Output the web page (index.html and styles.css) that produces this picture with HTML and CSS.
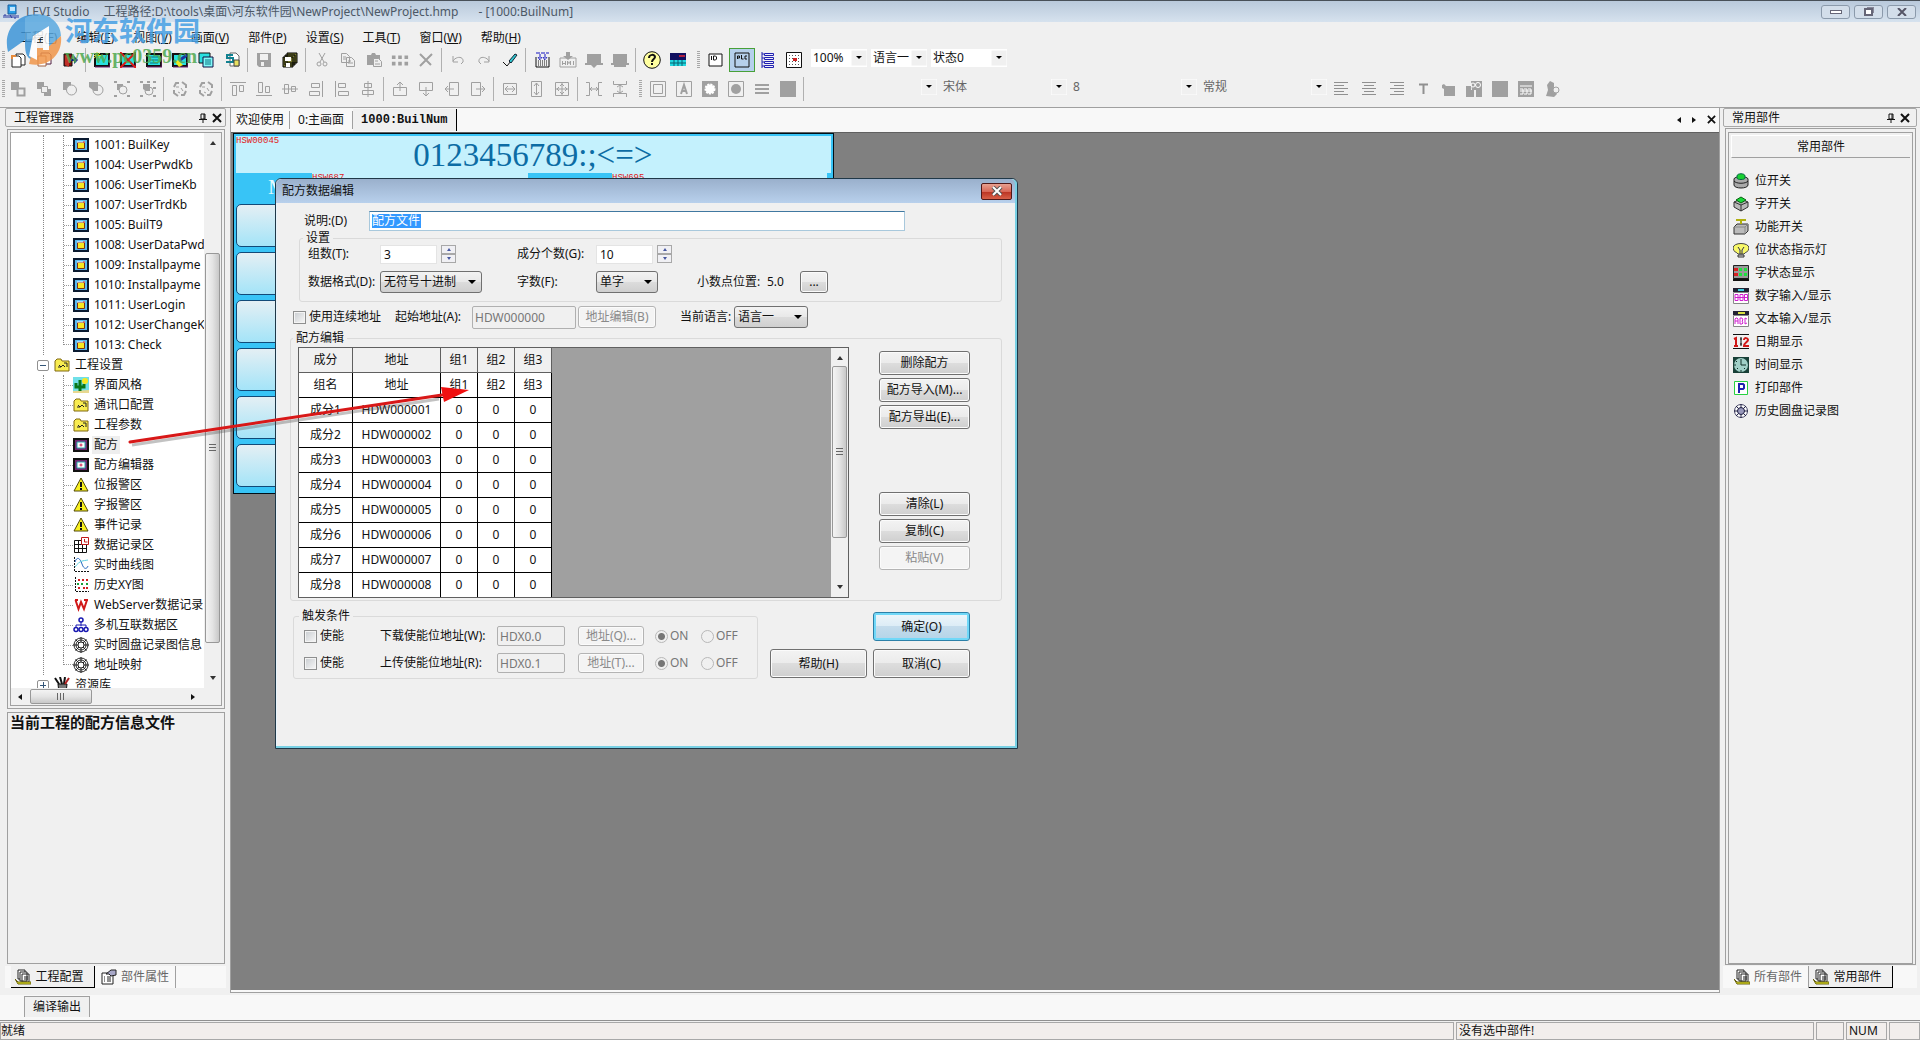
FILE: index.html
```html
<!DOCTYPE html>
<html lang="zh-CN">
<head>
<meta charset="utf-8">
<title>LEVI Studio</title>
<link rel="stylesheet" href="styles.css">
</head>
<body>
<svg class="defs" width="0" height="0" aria-hidden="true">
  <symbol id="app" viewBox="0 0 16 16"><path d="M5 1h8v9H5z" fill="#2aa0e8" stroke="#1a5c9c"/><path d="M7 3h5v4H7z" fill="#bfe6ff"/><path d="M1 14v-3h2v3m2 0v-3m2 3v-3l2 3v-3m2 0v3h2v-3m2 3v-3" stroke="#2838a0" fill="none"/></symbol>
  <symbol id="new" viewBox="0 0 16 16"><path d="M6 2h7l2 2v9H6z" fill="#fff" stroke="#222"/><path d="M2 4h7l2 2v9H2z" fill="#fff" stroke="#222"/><path d="M2 7V4h4" stroke="#e58a3a" fill="none" stroke-width="2"/></symbol>
  <symbol id="open" viewBox="0 0 16 16"><path d="M5 1h8l2 2v9H5z" fill="#fff" stroke="#502040"/><path d="M2 4h8v10H2z" fill="#fff" stroke="#a06040"/></symbol>
  <symbol id="exit" viewBox="0 0 16 16"><path d="M2 2h8v12H2z" fill="#8a1010" stroke="#111"/><path d="M3 3l4 2v10l-4-2z" fill="#c03028"/><path d="M9 7h3V4l4 4-4 4V9H9z" fill="#10108c"/></symbol>
  <symbol id="scr" viewBox="0 0 16 16"><path d="M1 2h14v12H1z" fill="#28e0e0" stroke="#111" stroke-width="2"/><path d="M1 15h15V3" stroke="#702070" fill="none"/></symbol>
  <symbol id="scrnew" viewBox="0 0 16 16"><use href="#scr"/><path d="M3 0v7M0 3.500h7M0 1l6 5M6 1L0 6" stroke="#d8e020"/></symbol>
  <symbol id="scrdel" viewBox="0 0 16 16"><use href="#scr"/><path d="M0 0l16 16M16 0L0 16" stroke="#e01818" stroke-width="2"/></symbol>
  <symbol id="scrlist" viewBox="0 0 16 16"><use href="#scr"/><path d="M4 5h8M4 8h8M4 11h8" stroke="#087080"/></symbol>
  <symbol id="scredit" viewBox="0 0 16 16"><use href="#scr"/><path d="M3 10l4 5 4-2-5-5z" fill="#f0e820"/><path d="M8 8l7-5" stroke="#1838a0" stroke-width="3"/></symbol>
  <symbol id="scrcopy" viewBox="0 0 16 16"><path d="M1 1h11v10H1z" fill="#28e0e0" stroke="#111"/><path d="M5 5h10v10H5z" fill="#80f8f8" stroke="#114"/><path d="M7 8h6M7 10h6M7 12h6" stroke="#087080"/></symbol>
  <symbol id="scrset" viewBox="0 0 16 16"><path d="M6 1h6l3 3v10H6z" fill="#fff" stroke="#666"/><path d="M9 3H3v3h6v4H2" stroke="#118090" stroke-width="2" fill="none"/><path d="M10 8h5v6h-5z" fill="#e8e060" stroke="#444"/></symbol>
  <symbol id="save" viewBox="0 0 16 16"><path fill="#a0a0a0" fill-rule="evenodd" d="M1 1h14v14H3l-2-2zM4 2v6h8V2zM5 10v4h3v-4z"/></symbol>
  <symbol id="saveall" viewBox="0 0 16 16"><path d="M5 1h10v10H5zM3 3h10v10H3zM1 5h10v10H1z" fill="#777830" stroke="#000"/><path d="M3 5h6v4H3zM4 11h4v4H4z" fill="#fff"/></symbol>
  <symbol id="cut" viewBox="0 0 16 16"><path d="M5 1l5 9M11 1L6 10" stroke="#a0a0a0" fill="none"/><circle cx="5" cy="12" r="2" fill="none" stroke="#a0a0a0"/><circle cx="11" cy="12" r="2" fill="none" stroke="#a0a0a0"/></symbol>
  <symbol id="copy" viewBox="0 0 16 16"><path d="M1.500 1.500h5l3 3v6h-8zM6.500 5.500h5l3 3v6h-8zM3 5h3M3 7h3M8 9h3M8 11h5" stroke="#a0a0a0" fill="#efefef"/></symbol>
  <symbol id="paste" viewBox="0 0 16 16"><path d="M1 3h4l1-2h3l1 2h4v10H1z" fill="#a0a0a0"/><path d="M7.500 6.500h5l3 3v5h-8zM9 9h3M9 12h5" fill="#efefef" stroke="#a0a0a0"/></symbol>
  <symbol id="multi" viewBox="0 0 20 16"><path d="M1 3h4v4H1zM8 3h4v4H8zM15 3h4v4h-4zM1 10h4v4H1zM8 10h4v4H8zM15 10h4v4h-4z" fill="#a0a0a0"/></symbol>
  <symbol id="del" viewBox="0 0 16 16"><path d="M2 2l11 11M14 2L2 14" stroke="#a0a0a0" stroke-width="2"/></symbol>
  <symbol id="undo" viewBox="0 0 16 16"><path d="M3 4v6h5M3 9c3-5 11-5 10 1l-2 2" stroke="#a0a0a0" fill="none"/></symbol>
  <symbol id="redo" viewBox="0 0 16 16"><path d="M13 4v6H8M13 9C10 4 2 4 3 10l2 2" stroke="#a0a0a0" fill="none"/></symbol>
  <symbol id="brush" viewBox="0 0 16 16"><path d="M1 10l4 4 4-5" stroke="#111" fill="none"/><path d="M7 9l6-7 2 1-6 8z" fill="#30c8d0" stroke="#123"/></symbol>
  <symbol id="compile" viewBox="0 0 16 16"><path d="M2 5v10h13V5" fill="none" stroke="#111"/><path d="M4 9h9M4 11h9M4 13h9" stroke="#111" stroke-dasharray="1 1"/><path d="M6 2v5M11 2v5M4 5l2 3 2-3M9 5l2 3 2-3M2 1h13" stroke="#1515c0" fill="none" stroke-dasharray="4 1"/></symbol>
  <symbol id="hmi" viewBox="0 0 18 16"><path d="M1 6h16v9H1z" fill="none" stroke="#a0a0a0"/><path d="M7 0h4v4h3L9 8 4 4h3zM3 9h1v4H3zM6 9h1v4H6zM3 11h4v1H3zM8 13V9h1l1 2 1-2h1v4h-1v-2l-1 1-1-1v2zM14 9h1v4h-1z" fill="#a0a0a0"/></symbol>
  <symbol id="down" viewBox="0 0 18 16"><path d="M2 2h14v9h2v2h-6l-3 3-3-3H0v-2h2z" fill="#a0a0a0"/></symbol>
  <symbol id="online" viewBox="0 0 18 16"><path d="M2 2h14v9h2v2h-3v2H3v-2H0v-2h2z" fill="#a0a0a0"/></symbol>
  <symbol id="help" viewBox="0 0 18 18"><circle cx="9" cy="9" r="8.300" fill="#ffffa0" stroke="#111"/><path d="M6 7c0-4 6-4 6-1 0 2-3 2-3 5M9 12v2" stroke="#111" stroke-width="2" fill="none"/></symbol>
  <symbol id="panel" viewBox="0 0 16 16"><path d="M0 1h16v7H0z" fill="#101060"/><path d="M0 8h16v6H0z" fill="#20d8e0"/><path d="M9 4h6" stroke="#b02040" stroke-width="2"/><path d="M0 11h16M4 8v6M8 8v6M12 8v6" stroke="#086070"/></symbol>
  <symbol id="idbox" viewBox="0 0 16 16"><path d="M1 2h13v12H1z" fill="#fff" stroke="#111"/><path d="M3.500 4v4M5.500 4v4h2l1-1V5l-1-1z" stroke="#111" fill="none"/></symbol>
  <symbol id="plc" viewBox="0 0 16 16"><path d="M1 1h14v14H1z" fill="#b6d0ec" stroke="#111"/><path d="M3.500 7V4h2v2h-2M7.500 3v4h2M13 4h-2v3h2" stroke="#111" fill="none"/></symbol>
  <symbol id="list" viewBox="0 0 16 16"><path d="M2 0v16M4.500 1.500h9v2h-9zM4.500 5.500h9v2h-9zM4.500 9.500h9v2h-9zM4.500 13.500h9v2h-9zM2 2h2M2 6h2M2 10h2M2 14h2" stroke="#2020b0" fill="#eef"/></symbol>
  <symbol id="dots" viewBox="0 0 16 16"><path d="M.5.5h15v15H.5z" fill="#fff" stroke="#111"/><path d="M3 3.500h11M3 6.500h11M3 9.500h11M3 12.500h11" stroke="#555" stroke-dasharray="1 2"/><path d="M7 6h4v3H7z" fill="#d02020"/></symbol>
  <symbol id="front" viewBox="0 0 16 16"><path d="M1 1h8v8H1z" fill="#a0a0a0"/><path d="M7.500 7.500h7v7h-7z" fill="#efefef" stroke="#a0a0a0" stroke-width="2"/></symbol>
  <symbol id="back" viewBox="0 0 16 16"><path d="M1 1h7v7H1zM8 8h7v7H8z" fill="#a0a0a0"/><path d="M5.500 5.500h6v6h-6z" fill="#efefef" stroke="#a0a0a0"/></symbol>
  <symbol id="up1" viewBox="0 0 16 16"><path d="M1 1h8v8H1z" fill="#a0a0a0"/><circle cx="9.500" cy="9" r="5" fill="#efefef" stroke="#a0a0a0"/></symbol>
  <symbol id="dn1" viewBox="0 0 16 16"><circle cx="10" cy="9" r="5" fill="#efefef" stroke="#a0a0a0"/><path d="M1 1h9v9H6L1 6z" fill="#a0a0a0"/></symbol>
  <symbol id="grp" viewBox="0 0 16 16"><path d="M3 3h6v6H3z" fill="#a0a0a0"/><circle cx="9" cy="9" r="4" fill="#efefef" stroke="#a0a0a0"/><path d="M0 1h3M13 1h3M0 15h3M13 15h3" stroke="#a0a0a0" stroke-width="2"/></symbol>
  <symbol id="ungrp" viewBox="0 0 16 16"><circle cx="9" cy="10" r="4" fill="#efefef" stroke="#a0a0a0"/><path d="M3 3h7v7H6L3 8z" fill="#a0a0a0"/><path d="M0 1h3M7 1h3M13 1h3M0 15h3M13 15h3M13 7h3" stroke="#a0a0a0" stroke-width="2"/></symbol>
  <symbol id="rot" viewBox="0 0 16 16"><path d="M2 6l2-4h3M10 1l4 3v3M14 10l-2 4H9M6 15l-4-3V9" stroke="#a0a0a0" stroke-width="2" fill="none"/><path d="M4 6h3M9 7l2 3M6 11l2 1" stroke="#a0a0a0"/></symbol>
  <symbol id="altop" viewBox="0 0 16 16"><path d="M0 1.500h16M2.500 4.500h4v10h-4zM9.500 4.500h4v6h-4z" stroke="#a0a0a0" fill="none"/></symbol>
  <symbol id="albot" viewBox="0 0 16 16"><path d="M0 14.500h16M2.500 1.500h4v10h-4zM9.500 5.500h4v6h-4z" stroke="#a0a0a0" fill="none"/></symbol>
  <symbol id="almid" viewBox="0 0 16 16"><path d="M0 8h16M2.500 3.500h4v9h-4zM9.500 5.500h4v5h-4z" stroke="#a0a0a0" fill="none"/></symbol>
  <symbol id="alrt" viewBox="0 0 16 16"><path d="M14.500 0v16M3.500 2.500h8v4h-8zM1.500 10.500h10v4h-10z" stroke="#a0a0a0" fill="none"/></symbol>
  <symbol id="allf" viewBox="0 0 16 16"><path d="M1.500 0v16M4.500 2.500h7v4h-7zM4.500 10.500h10v4h-10z" stroke="#a0a0a0" fill="none"/></symbol>
  <symbol id="alctr" viewBox="0 0 16 16"><path d="M8 0v16M4.500 2.500h7v4h-7zM2.500 9.500h11v4h-11z" stroke="#a0a0a0" fill="none"/></symbol>
  <symbol id="mvup" viewBox="0 0 16 16"><path d="M1.500 6.500h13v8h-13zM8 10V1M5 4l3-3 3 3" stroke="#a0a0a0" fill="none"/></symbol>
  <symbol id="mvdn" viewBox="0 0 16 16"><path d="M1.500 1.500h13v8h-13zM8 6v9M5 12l3 3 3-3" stroke="#a0a0a0" fill="none"/></symbol>
  <symbol id="mvlf" viewBox="0 0 16 16"><path d="M5.500 1.500h9v13h-9zM10 8H1M4 5L1 8l3 3" stroke="#a0a0a0" fill="none"/></symbol>
  <symbol id="mvrt" viewBox="0 0 16 16"><path d="M1.500 1.500h9v13h-9zM6 8h9M12 5l3 3-3 3" stroke="#a0a0a0" fill="none"/></symbol>
  <symbol id="szw" viewBox="0 0 16 16"><path d="M1.500 2.500h13v11h-13zM3 8h10M6 5L3 8l3 3M10 5l3 3-3 3" stroke="#a0a0a0" fill="none"/></symbol>
  <symbol id="szh" viewBox="0 0 16 16"><path d="M3.500.5h10v15h-10zM8.500 2v12M6 5l2.500-3L11 5M6 11l2.500 3 2.500-3" stroke="#a0a0a0" fill="none"/></symbol>
  <symbol id="szb" viewBox="0 0 16 16"><path d="M1.500 1.500h13v13h-13zM8 2v12M2 8h12M6 5l2-2 2 2M6 11l2 2 2-2M5 6L3 8l2 2M11 6l2 2-2 2" stroke="#a0a0a0" fill="none"/></symbol>
  <symbol id="sph" viewBox="0 0 16 16"><path d="M0 1.500h3.500v13H0M16 1.500h-3.500v13H16M4 8h8M6 6L4 8l2 2M10 6l2 2-2 2" stroke="#a0a0a0" fill="none"/></symbol>
  <symbol id="spv" viewBox="0 0 16 16"><path d="M1.500 0v3.500h13V0M1.500 16v-3.500h13V16M8 4v8M5 6l3-2 3 2M5 10l3 2 3-2" stroke="#a0a0a0" fill="none"/></symbol>
  <symbol id="frame" viewBox="0 0 16 16"><path d="M.5.5h15v15H.5zM3.500 3.500h9v9h-9z" stroke="#a0a0a0" fill="none"/></symbol>
  <symbol id="lettera" viewBox="0 0 16 16"><path d="M.5.500h15v15H.5z" stroke="#a0a0a0" fill="none"/><path d="M5 13l3-9 3 9M6 10h4" stroke="#a0a0a0" stroke-width="2" fill="none"/></symbol>
  <symbol id="gear" viewBox="0 0 16 16"><path d="M0 0h16v16H0z" fill="#a0a0a0"/><circle cx="8" cy="8" r="4.500" fill="#fff" stroke="#fff" stroke-dasharray="2 1" stroke-width="2"/></symbol>
  <symbol id="ball" viewBox="0 0 16 16"><path d="M.5.5h15v15H.5z" stroke="#a0a0a0" fill="none"/><circle cx="8" cy="8" r="5" fill="#a0a0a0"/></symbol>
  <symbol id="bars" viewBox="0 0 16 16"><path d="M1 4h14M1 8h14M1 12h14" stroke="#a0a0a0" stroke-width="2"/></symbol>
  <symbol id="fill" viewBox="0 0 16 16"><path d="M0 0h16v16H0z" fill="#a0a0a0"/></symbol>
  <symbol id="txl" viewBox="0 0 14 16"><path d="M0 1.500h14M0 4.500h10M0 7.500h14M0 10.500h10M0 13.500h14" stroke="#909090"/></symbol>
  <symbol id="txc" viewBox="0 0 14 16"><path d="M0 1.500h14M2 4.500h10M0 7.500h14M2 10.500h10M0 13.500h14" stroke="#909090"/></symbol>
  <symbol id="txr" viewBox="0 0 14 16"><path d="M0 1.500h14M4 4.500h10M0 7.500h14M4 10.500h10M0 13.500h14" stroke="#909090"/></symbol>
  <symbol id="tee" viewBox="0 0 16 16"><path d="M4 3.500h9M8.500 3v10" stroke="#909090" stroke-width="2"/></symbol>
  <symbol id="cube" viewBox="0 0 16 16"><path d="M2 4l2-1 2 2h9v10H4V8L2 7z" fill="#a0a0a0"/></symbol>
  <symbol id="rec" viewBox="0 0 16 16"><path d="M0 5h5v4h3v7H0zM5 0h11v16h-6V9H6z" fill="#a0a0a0"/><circle cx="7" cy="4" r="2" fill="none" stroke="#fff"/><circle cx="12" cy="4" r="2.500" fill="none" stroke="#fff"/></symbol>
  <symbol id="tab" viewBox="0 0 16 16"><path d="M0 0h16v16H0z" fill="#a0a0a0"/><path d="M2 5h12M2 8h3v5H2M6 8h3v5H6M10 8h3v5h-3M2 10h12" stroke="#fff" fill="none"/></symbol>
  <symbol id="user" viewBox="0 0 16 16"><path d="M2 15l2-6-1-5 3-4 4 2v5l3 6-3 3z" fill="#a0a0a0"/><circle cx="12" cy="9" r="3" fill="#efefef" stroke="#a0a0a0"/></symbol>
  <symbol id="pin" viewBox="0 0 10 10"><path d="M3 1h4v5H3zM6 1v5M1 6.500h8M5 7v3" stroke="#111" fill="none"/></symbol>
  <symbol id="x" viewBox="0 0 10 10"><path d="M1 1l8 8M9 1L1 9" stroke="#111" stroke-width="2"/></symbol>
  <symbol id="page" viewBox="0 0 16 16"><path d="M1 2h14v12H1z" fill="#58b8f0" stroke="#0a1a30" stroke-width="2"/><path d="M4.500 5.500h7v6h-7z" fill="#f8e820" stroke="#803010"/><path d="M4 5h8" stroke="#fff"/><path d="M10 5h2" stroke="#d02020"/></symbol>
  <symbol id="folder" viewBox="0 0 16 16"><path d="M1 4l2-2h4l1 2h7v10H1z" fill="#f8ec50" stroke="#806810"/><path d="M5 8l2 2 2-2 2 2M10 6h3v4M4 10h3" stroke="#222" fill="none"/></symbol>
  <symbol id="style" viewBox="0 0 16 16"><path d="M0 0h16v16H0z" fill="#70e0e8"/><circle cx="12" cy="4" r="3" fill="#f8e820"/><path d="M0 14l16-1v3H0z" fill="#e8d890"/><path d="M7 14V3M3 6v4h4M11 7v3H7" stroke="#087818" stroke-width="3" fill="none"/></symbol>
  <symbol id="recipe" viewBox="0 0 16 16"><path d="M1 2h14v12H1z" fill="#702870" stroke="#111" stroke-width="2"/><path d="M4 5h8v6H4z" fill="#fff" stroke="#30a8b0"/><path d="M8 6.500v3M6.500 8h3" stroke="#d02050"/></symbol>
  <symbol id="warn" viewBox="0 0 16 16"><path d="M8 1l7 13H1z" fill="#f8f020" stroke="#504808"/><path d="M8 5v5M8 11v2" stroke="#111" stroke-width="2"/></symbol>
  <symbol id="datalog" viewBox="0 0 16 16"><path d="M1.500 3.500h12v12h-12zM1.500 7.500h12M1.500 11.500h12M5.500 3v12M9.500 3v12" stroke="#111" fill="#fff"/><path d="M8.500.5h7v7h-7z" fill="#fff" stroke="#c01818"/><path d="M11.500 2v3h3" stroke="#c01818" fill="none"/></symbol>
  <symbol id="curve" viewBox="0 0 16 16"><path d="M1.500 0v14.500H16" stroke="#111" fill="none" stroke-dasharray="2 1"/><path d="M2 5c2-6 5-4 7 2s5 5 6 2" stroke="#2868c0" fill="none"/><path d="M2 10c5-7 8-6 13-7" stroke="#60d0e0" fill="none"/></symbol>
  <symbol id="xy" viewBox="0 0 16 16"><path d="M2.500 0v14.500H16" stroke="#111" fill="none" stroke-dasharray="2 1"/><path d="M5 3h2m2 0h2m2 0h2" stroke="#d02020" stroke-width="2"/><path d="M4 7h2m2 0h2m3 0h2" stroke="#18a038" stroke-width="2"/><path d="M5 11h2m3 0h2m1 0h2" stroke="#d02020" stroke-width="2"/></symbol>
  <symbol id="web" viewBox="0 0 16 16"><path d="M2 3h3M2.500 3l3 9L8 5l3 7 3-9M11 3h4" stroke="#d01818" stroke-width="2" fill="none"/></symbol>
  <symbol id="net" viewBox="0 0 16 16"><path d="M8 5v4M3 11V8h10v3" stroke="#1818b0" fill="none"/><g fill="#fff" stroke="#1818b0" stroke-width="1.500"><circle cx="8" cy="3" r="2"/><circle cx="3" cy="12.500" r="2"/><circle cx="8" cy="12.500" r="2"/><circle cx="13" cy="12.500" r="2"/></g></symbol>
  <symbol id="disc" viewBox="0 0 16 16"><g fill="none" stroke="#222"><path d="M8 0v16M0 8h16M2.500 2.500l11 11M13.500 2.500l-11 11"/><circle cx="8" cy="8" r="7"/><circle cx="8" cy="8" r="5"/><circle cx="8" cy="8" r="3" fill="#fff"/></g></symbol>
  <symbol id="pens" viewBox="0 0 16 16"><path d="M4 7h9l-1 9H5z" fill="#777" stroke="#111"/><path d="M5 7L1 1M8 7L6 0M10 7l1-7" stroke="#111" stroke-width="2"/><path d="M11 7l4-6" stroke="#b02020" stroke-width="2"/></symbol>
  <symbol id="docs" viewBox="0 0 16 16"><path d="M3 1h7v9H3z" fill="#fff" stroke="#222"/><path d="M5 3h7v9H5zM7 5h7v8H7z" fill="#fff" stroke="#222"/><path d="M9 8h4M9 10h4" stroke="#222"/><path d="M0 10l3 3h13v2H3z" fill="#f0f020" stroke="#666010"/></symbol>
  <symbol id="props" viewBox="0 0 16 16"><path d="M1 4h11v11H1z" fill="#fff" stroke="#222"/><path d="M3 8h1m2 0h4M3 10h1m2 0h4M3 12h1m2 0h4" stroke="#222"/><path d="M5 5l5-4h5v5l-5 1-2-2z" fill="#a8a8c8" stroke="#222"/></symbol>
  <symbol id="bitsw" viewBox="0 0 16 16"><path d="M1 6c0-3 14-3 14 0v6c0 4-14 4-14 0z" fill="#aaa" stroke="#222"/><path d="M1 8c2 3 12 3 14 0" stroke="#222" fill="none"/><path d="M4 3c0-3 8-3 8 0v2c0 2-8 2-8 0z" fill="#18d030" stroke="#064"/></symbol>
  <symbol id="wordsw" viewBox="0 0 16 16"><path d="M1 6l7-3 7 3v5l-7 4-7-4z" fill="#b8b8b8" stroke="#333"/><path d="M8 9v6M1 6l7 3 7-3" stroke="#333" fill="none"/><path d="M3 4l5-3 5 3-5 3z" fill="#18d838" stroke="#086010"/></symbol>
  <symbol id="funcsw" viewBox="0 0 16 16"><path d="M1 8l3-3h11v7l-3 3H1z" fill="#bbb" stroke="#333"/><path d="M1 8h11v7M12 8l3-3" stroke="#888" fill="none"/><path d="M3 1h10M8 1v4" stroke="#b0b010" stroke-width="2"/></symbol>
  <symbol id="lamp" viewBox="0 0 16 16"><path d="M0 6c0-6 16-6 16 0 0 4-4 4-5 6H5C4 10 0 10 0 6z" fill="#f8f868" stroke="#444"/><path d="M5 5l2 3v4M11 5L9 8v4M5 13h6v2H5z" stroke="#333" fill="#ddd"/></symbol>
  <symbol id="wordst" viewBox="0 0 16 16"><path d="M.5.5h15v13H.5z" fill="#999" stroke="#222"/><path d="M0 15h16" stroke="#111" stroke-width="3"/><path d="M1 3h4v3H1zM1 8h4v3H1z" fill="#d82020"/><path d="M6 3h3v3H6zM11 3h3v3h-3zM6 8h3v3H6zM11 8h3v3h-3z" fill="#20e040"/></symbol>
  <symbol id="num" viewBox="0 0 16 16"><path d="M0 0h16v4H0z" fill="#223"/><path d="M5 2h6" stroke="#40d0e0" stroke-width="2"/><path d="M.5 4.500h15v11H.5z" fill="#fff" stroke="#888"/><path d="M2 6.500h3v6H2zM7 6.500h3v6H7zM11.500 6.500h3v6h-3zM2 9.500h12" stroke="#d020d0" fill="none"/></symbol>
  <symbol id="txt" viewBox="0 0 16 16"><path d="M0 0h16v4H0z" fill="#223"/><path d="M5 2h7" stroke="#d8e040" stroke-width="2"/><path d="M.5 4.500h15v11H.5z" fill="#fff" stroke="#888"/><path d="M2 13V8l1-1h1l1 1v5M2 10h3M7 7h2l1 2-1 1 1 2-1 1H7zM14 8l-2-1v6l2-1" stroke="#d020d0" fill="none"/></symbol>
  <symbol id="date" viewBox="0 0 16 16"><path d="M0 .5h16M0 14.500h16" stroke="#111"/><path d="M1 5l2-1v8M1 12h4M11 6c0-3 4-2 4 0 0 2-4 3-4 6h5" stroke="#d01818" stroke-width="2" fill="none"/><path d="M8 3v9M7 5h2M7 10h2" stroke="#111"/></symbol>
  <symbol id="clock" viewBox="0 0 16 16"><path d="M0 0h16v16H0z" fill="#184038"/><circle cx="8" cy="8" r="7" fill="#a0d0c8"/><path d="M8 2v6h5M3 4l1 1M4 12l1-1M12 12l-1-1M8 13v2M1 8h2" stroke="#103028" fill="none"/></symbol>
  <symbol id="print" viewBox="0 0 16 16"><path d="M1.500 1.500h13v13h-13z" fill="#fff" stroke="#28d040"/><path d="M6 13V4h4l1 1v3l-1 1H6" stroke="#2020b0" stroke-width="2" fill="none"/></symbol>
  <symbol id="hdisc" viewBox="0 0 16 16"><circle cx="8" cy="8" r="6.500" fill="#fff" stroke="#446"/><path d="M8 1v14M1 8h14M3 3l10 10M13 3L3 13" stroke="#224"/><circle cx="8" cy="8" r="3.500" fill="#99b" stroke="#224"/></symbol>
</svg>

<header class="titlebar">
  <svg class="ic"><use href="#app"/></svg>
  <h1>LEVI Studio</h1><span>工程路径:D:\tools\桌面\河东软件园\NewProject\NewProject.hmp</span><span>- [1000:BuilNum]</span>
  <div class="winbtns"><button aria-label="最小化"><i class="min"></i></button><button aria-label="还原"><i class="res"></i></button><button aria-label="关闭"><svg width="10" height="8"><path d="M1 0l8 8M9 0L1 8" stroke="#556" stroke-width="2"/></svg></button></div>
</header>

<nav class="menu">
  <a href="#">工程(<u>F</u>)</a><a href="#">编辑(<u>E</u>)</a><a href="#">视图(<u>V</u>)</a><a href="#">画面(<u>V</u>)</a><a href="#">部件(<u>P</u>)</a><a href="#">设置(<u>S</u>)</a><a href="#">工具(<u>T</u>)</a><a href="#">窗口(<u>W</u>)</a><a href="#">帮助(<u>H</u>)</a>
</nav>

<div class="toolbar">
  <i class="grip"></i>
  <button title="新建"><svg class="ic"><use href="#new"/></svg></button><button title="打开"><svg class="ic"><use href="#open"/></svg></button><button title="关闭"><svg class="ic"><use href="#exit"/></svg></button>
  <i class="sep"></i>
  <button title="新建画面"><svg class="ic"><use href="#scrnew"/></svg></button><button title="删除画面"><svg class="ic"><use href="#scrdel"/></svg></button><button title="画面列表"><svg class="ic"><use href="#scrlist"/></svg></button><button title="画面属性"><svg class="ic"><use href="#scredit"/></svg></button><button title="复制画面"><svg class="ic"><use href="#scrcopy"/></svg></button><button title="画面设置"><svg class="ic"><use href="#scrset"/></svg></button>
  <i class="sep"></i>
  <button title="保存"><svg class="ic"><use href="#save"/></svg></button><button title="全部保存"><svg class="ic"><use href="#saveall"/></svg></button>
  <i class="sep"></i>
  <button title="剪切"><svg class="ic"><use href="#cut"/></svg></button><button title="复制"><svg class="ic"><use href="#copy"/></svg></button><button title="粘贴"><svg class="ic"><use href="#paste"/></svg></button><button title="多重复制"><svg class="ic wide"><use href="#multi"/></svg></button><button title="删除"><svg class="ic"><use href="#del"/></svg></button>
  <i class="sep"></i>
  <button title="撤消"><svg class="ic"><use href="#undo"/></svg></button><button title="重做"><svg class="ic"><use href="#redo"/></svg></button><button title="格式刷"><svg class="ic"><use href="#brush"/></svg></button>
  <i class="sep"></i>
  <button title="编译"><svg class="ic"><use href="#compile"/></svg></button><button title="下载到HMI"><svg class="ic wide"><use href="#hmi"/></svg></button><button title="离线模拟"><svg class="ic wide"><use href="#down"/></svg></button><button title="在线模拟"><svg class="ic wide"><use href="#online"/></svg></button>
  <i class="sep"></i>
  <button title="帮助"><svg class="ic wide"><use href="#help"/></svg></button><button title="面板"><svg class="ic"><use href="#panel"/></svg></button>
  <i class="grip mid"></i>
  <button title="ID"><svg class="ic"><use href="#idbox"/></svg></button><button class="on" title="PLC"><svg class="ic"><use href="#plc"/></svg></button><button title="列表"><svg class="ic"><use href="#list"/></svg></button><button title="网格"><svg class="ic"><use href="#dots"/></svg></button>
  <select class="flat zoomsel" aria-label="缩放"><option>100%</option></select><select class="flat langsel" aria-label="语言"><option>语言一</option></select><select class="flat statesel" aria-label="状态"><option>状态0</option></select>
</div>
<div class="toolbar second">
  <i class="grip"></i>
  <button title="置顶"><svg class="ic"><use href="#front"/></svg></button><button title="置底"><svg class="ic"><use href="#back"/></svg></button><button title="上移一层"><svg class="ic"><use href="#up1"/></svg></button><button title="下移一层"><svg class="ic"><use href="#dn1"/></svg></button><button title="组合"><svg class="ic"><use href="#grp"/></svg></button><button title="取消组合"><svg class="ic"><use href="#ungrp"/></svg></button>
  <i class="sep"></i>
  <button title="左旋转"><svg class="ic"><use href="#rot"/></svg></button><button title="右旋转"><svg class="ic"><use href="#rot"/></svg></button>
  <i class="sep"></i>
  <button title="顶对齐"><svg class="ic"><use href="#altop"/></svg></button><button title="底对齐"><svg class="ic"><use href="#albot"/></svg></button><button title="水平居中"><svg class="ic"><use href="#almid"/></svg></button><button title="右对齐"><svg class="ic"><use href="#alrt"/></svg></button><button title="左对齐"><svg class="ic"><use href="#allf"/></svg></button><button title="垂直居中"><svg class="ic"><use href="#alctr"/></svg></button>
  <i class="sep"></i>
  <button title="上移"><svg class="ic"><use href="#mvup"/></svg></button><button title="下移"><svg class="ic"><use href="#mvdn"/></svg></button><button title="左移"><svg class="ic"><use href="#mvlf"/></svg></button><button title="右移"><svg class="ic"><use href="#mvrt"/></svg></button>
  <i class="sep"></i>
  <button title="等宽"><svg class="ic"><use href="#szw"/></svg></button><button title="等高"><svg class="ic"><use href="#szh"/></svg></button><button title="等大小"><svg class="ic"><use href="#szb"/></svg></button>
  <i class="sep"></i>
  <button title="水平等距"><svg class="ic"><use href="#sph"/></svg></button><button title="垂直等距"><svg class="ic"><use href="#spv"/></svg></button>
  <i class="grip mid"></i>
  <button title="边框"><svg class="ic"><use href="#frame"/></svg></button><button title="文本"><svg class="ic"><use href="#lettera"/></svg></button><button title="图样"><svg class="ic"><use href="#gear"/></svg></button><button title="图形"><svg class="ic"><use href="#ball"/></svg></button><button title="线型"><svg class="ic"><use href="#bars"/></svg></button><button title="填充"><svg class="ic"><use href="#fill"/></svg></button>
  <i class="sep"></i>
  <select class="flat dim" aria-label="样式"><option></option></select><select class="flat dim" aria-label="字体"><option>宋体</option></select><select class="flat dim" aria-label="字号"><option>8</option></select><select class="flat dim" aria-label="字形"><option>常规</option></select>
  <button class="al" title="文字左对齐"><svg class="ic"><use href="#txl"/></svg></button><button class="al" title="文字居中"><svg class="ic"><use href="#txc"/></svg></button><button class="al" title="文字右对齐"><svg class="ic"><use href="#txr"/></svg></button><button class="nar" title="文字"><svg class="ic"><use href="#tee"/></svg></button><button title="部件"><svg class="ic"><use href="#cube"/></svg></button><button title="录制"><svg class="ic"><use href="#rec"/></svg></button><button title="块"><svg class="ic"><use href="#fill"/></svg></button><button title="表"><svg class="ic"><use href="#tab"/></svg></button><button title="用户"><svg class="ic"><use href="#user"/></svg></button>
</div>

<main>
  <aside class="side left">
    <header class="cap"><h2>工程管理器</h2><button aria-label="固定"><svg><use href="#pin"/></svg></button><button aria-label="关闭"><svg><use href="#x"/></svg></button></header>
    <div class="treebox">
      <div class="treein">
        <div class="treemid">
          <ul class="tree">
            <li><i></i><svg class="ic"><use href="#page"/></svg><span>1001: BuilKey</span></li>
            <li><i></i><svg class="ic"><use href="#page"/></svg><span>1004: UserPwdKb</span></li>
            <li><i></i><svg class="ic"><use href="#page"/></svg><span>1006: UserTimeKb</span></li>
            <li><i></i><svg class="ic"><use href="#page"/></svg><span>1007: UserTrdKb</span></li>
            <li><i></i><svg class="ic"><use href="#page"/></svg><span>1005: BuilT9</span></li>
            <li><i></i><svg class="ic"><use href="#page"/></svg><span>1008: UserDataPwd</span></li>
            <li><i></i><svg class="ic"><use href="#page"/></svg><span>1009: Installpayme</span></li>
            <li><i></i><svg class="ic"><use href="#page"/></svg><span>1010: Installpayme</span></li>
            <li><i></i><svg class="ic"><use href="#page"/></svg><span>1011: UserLogin</span></li>
            <li><i></i><svg class="ic"><use href="#page"/></svg><span>1012: UserChangeK</span></li>
            <li class="last"><i></i><svg class="ic"><use href="#page"/></svg><span>1013: Check</span></li>
            <li class="node"><b class="exp"></b><svg class="ic"><use href="#folder"/></svg><span>工程设置</span></li>
            <li><i></i><svg class="ic"><use href="#style"/></svg><span>界面风格</span></li>
            <li><i></i><svg class="ic"><use href="#folder"/></svg><span>通讯口配置</span></li>
            <li><i></i><svg class="ic"><use href="#folder"/></svg><span>工程参数</span></li>
            <li><i></i><svg class="ic"><use href="#recipe"/></svg><span class="sel">配方</span></li>
            <li><i></i><svg class="ic"><use href="#recipe"/></svg><span>配方编辑器</span></li>
            <li><i></i><svg class="ic"><use href="#warn"/></svg><span>位报警区</span></li>
            <li><i></i><svg class="ic"><use href="#warn"/></svg><span>字报警区</span></li>
            <li><i></i><svg class="ic"><use href="#warn"/></svg><span>事件记录</span></li>
            <li><i></i><svg class="ic"><use href="#datalog"/></svg><span>数据记录区</span></li>
            <li><i></i><svg class="ic"><use href="#curve"/></svg><span>实时曲线图</span></li>
            <li><i></i><svg class="ic"><use href="#xy"/></svg><span>历史XY图</span></li>
            <li><i></i><svg class="ic"><use href="#web"/></svg><span>WebServer数据记录</span></li>
            <li><i></i><svg class="ic"><use href="#net"/></svg><span>多机互联数据区</span></li>
            <li><i></i><svg class="ic"><use href="#disc"/></svg><span>实时圆盘记录图信息</span></li>
            <li class="last"><i></i><svg class="ic"><use href="#disc"/></svg><span>地址映射</span></li>
            <li class="node"><b class="exp plus"></b><svg class="ic"><use href="#pens"/></svg><span>资源库</span></li>
          </ul>
          <div class="vbar"><i class="arr up"></i><div class="track"><div class="thumb treethumb"><i class="ribs"></i></div></div><i class="arr dn"></i></div>
        </div>
        <div class="hbar"><i class="arr lf"></i><div class="hthumb"><i class="ribs v"></i></div><i class="arr rt"></i></div>
      </div>
    </div>
    <p class="desc">当前工程的配方信息文件</p>
    <div class="ptabs"><button class="act"><svg class="ic"><use href="#docs"/></svg>工程配置</button><button><svg class="ic"><use href="#props"/></svg>部件属性</button></div>
  </aside>

  <section class="center">
    <div class="dtabs"><button>欢迎使用</button><button>0:主画面</button><button class="act">1000:BuilNum</button>
      <div class="nav"><i class="arr lf"></i><i class="arr rt"></i><button aria-label="关闭"><svg><use href="#x"/></svg></button></div></div>
    <div class="canvas">
      <div class="hmi">
        <div class="disp"><em>HSW00045</em><strong>0123456789:;&lt;=&gt;</strong></div>
        <div class="limits"><span class="lbl">M</span><span class="fld"><em>HSW687</em></span><span></span><span class="fld"><em>HSW695</em></span></div>
        <div class="keys"><button aria-label="键1"></button><button aria-label="键2"></button><button aria-label="键3"></button><button aria-label="键4"></button><button aria-label="键5"></button><button aria-label="键6"></button></div>
      </div>
    </div>
  </section>

  <aside class="side right">
    <header class="cap"><h2>常用部件</h2><button aria-label="固定"><svg><use href="#pin"/></svg></button><button aria-label="关闭"><svg><use href="#x"/></svg></button></header>
    <div class="partsbox"><div class="partsin">
      <h3>常用部件</h3>
      <ul class="parts">
        <li><svg class="ic"><use href="#bitsw"/></svg>位开关</li>
        <li><svg class="ic"><use href="#wordsw"/></svg>字开关</li>
        <li><svg class="ic"><use href="#funcsw"/></svg>功能开关</li>
        <li><svg class="ic"><use href="#lamp"/></svg>位状态指示灯</li>
        <li><svg class="ic"><use href="#wordst"/></svg>字状态显示</li>
        <li><svg class="ic"><use href="#num"/></svg>数字输入/显示</li>
        <li><svg class="ic"><use href="#txt"/></svg>文本输入/显示</li>
        <li><svg class="ic"><use href="#date"/></svg>日期显示</li>
        <li><svg class="ic"><use href="#clock"/></svg>时间显示</li>
        <li><svg class="ic"><use href="#print"/></svg>打印部件</li>
        <li><svg class="ic"><use href="#hdisc"/></svg>历史圆盘记录图</li>
      </ul>
    </div></div>
    <div class="ptabs"><button><svg class="ic"><use href="#docs"/></svg>所有部件</button><button class="act"><svg class="ic"><use href="#docs"/></svg>常用部件</button></div>
  </aside>
</main>

<div class="output"><button>编译输出</button></div>
<footer class="status"><span>就绪</span><span class="s2">没有选中部件!</span><span class="s3"></span><span class="s4">NUM</span><span class="s5"></span></footer>

<div class="dialog" role="dialog" aria-label="配方数据编辑">
  <header><h2>配方数据编辑</h2><button aria-label="关闭"><svg width="12" height="10"><path d="M2 1l8 8M10 1L2 9" stroke="#555" stroke-width="4"/><path d="M2 1l8 8M10 1L2 9" stroke="#fff" stroke-width="2"/></svg></button></header>
  <div class="rowdesc"><label for="desc">说明:(D)</label><div class="edit"><input id="desc" value="配方文件" size="7"></div></div>
  <fieldset class="set">
    <legend>设置</legend>
    <label for="grp-n">组数(T):</label><div class="spin"><input id="grp-n" value="3"><span><button aria-label="增加"><i class="arr up"></i></button><button aria-label="减少"><i class="arr dn"></i></button></span></div>
    <label for="cmp-n">成分个数(G):</label><div class="spin"><input id="cmp-n" value="10"><span><button aria-label="增加"><i class="arr up"></i></button><button aria-label="减少"><i class="arr dn"></i></button></span></div><div></div>
    <label for="fmt">数据格式(D):</label><div><select class="w102" id="fmt"><option>无符号十进制</option></select></div>
    <label for="words">字数(F):</label><div><select class="w62" id="words"><option>单字</option></select></div>
    <div class="point"><span>小数点位置:</span><span>5.0</span><button class="btn">...</button></div>
  </fieldset>
  <div class="rowaddr"><input type="checkbox" id="cont"><label class="l1" for="cont">使用连续地址</label><label class="l2" for="start">起始地址(A):</label><input class="box" id="start" value="HDW000000" disabled><button class="btn w78" disabled>地址编辑(B)</button><label class="l3" for="lang">当前语言:</label><select class="w74" id="lang"><option>语言一</option></select></div>
  <fieldset class="recipe">
    <legend>配方编辑</legend>
    <div class="grid">
      <div class="cells"><table>
        <thead><tr><th class="c1">成分</th><th class="c2">地址</th><th>组1</th><th>组2</th><th>组3</th></tr></thead>
        <tbody>
        <tr><td>组名</td><td>地址</td><td>组1</td><td>组2</td><td>组3</td></tr>
        <tr><td>成分1</td><td>HDW000001</td><td>0</td><td>0</td><td>0</td></tr>
        <tr><td>成分2</td><td>HDW000002</td><td>0</td><td>0</td><td>0</td></tr>
        <tr><td>成分3</td><td>HDW000003</td><td>0</td><td>0</td><td>0</td></tr>
        <tr><td>成分4</td><td>HDW000004</td><td>0</td><td>0</td><td>0</td></tr>
        <tr><td>成分5</td><td>HDW000005</td><td>0</td><td>0</td><td>0</td></tr>
        <tr><td>成分6</td><td>HDW000006</td><td>0</td><td>0</td><td>0</td></tr>
        <tr><td>成分7</td><td>HDW000007</td><td>0</td><td>0</td><td>0</td></tr>
        <tr><td>成分8</td><td>HDW000008</td><td>0</td><td>0</td><td>0</td></tr>
        </tbody></table></div>
      <div class="vbar"><i class="arr up"></i><div class="track"><div class="thumb gridthumb"><i class="ribs"></i></div></div><i class="arr dn"></i></div>
    </div>
    <div class="acts">
      <button class="btn">删除配方</button><button class="btn">配方导入(M)...</button><button class="btn">配方导出(E)...</button>
      <button class="btn gapped">清除(L)</button><button class="btn">复制(C)</button><button class="btn" disabled>粘贴(V)</button>
    </div>
  </fieldset>
  <div class="bottom">
    <fieldset class="trig">
      <legend>触发条件</legend>
      <div class="trow"><input type="checkbox" id="en1"><label class="t1" for="en1">使能</label><label class="t2" for="dl">下载使能位地址(W):</label><input class="box" id="dl" value="HDX0.0" disabled><button class="btn" disabled>地址(Q)...</button><input type="radio" name="r1" id="on1" checked disabled><label class="t3" for="on1">ON</label><input type="radio" name="r1" id="off1" disabled><label class="t3" for="off1">OFF</label></div>
      <div class="trow"><input type="checkbox" id="en2"><label class="t1" for="en2">使能</label><label class="t2" for="ul">上传使能位地址(R):</label><input class="box" id="ul" value="HDX0.1" disabled><button class="btn" disabled>地址(T)...</button><input type="radio" name="r2" id="on2" checked disabled><label class="t3" for="on2">ON</label><input type="radio" name="r2" id="off2" disabled><label class="t3" for="off2">OFF</label></div>
    </fieldset>
    <div class="okrow"><button class="btn ok">确定(O)</button><button class="btn">帮助(H)</button><button class="btn">取消(C)</button></div>
  </div>
</div>

<svg class="pointer" width="350" height="70" aria-hidden="true"><path d="M5 60L312 14" stroke="#505050" stroke-opacity=".35" stroke-width="3"/><path d="M3 57L315 10" stroke="#d81818" stroke-width="3" stroke-linecap="round"/><path d="M314 2l28 3-25 12z" fill="#f01010"/></svg>

<div class="mark" aria-hidden="true">
  <svg width="58" height="56" viewBox="0 0 58 56"><path d="M3 40C-4 12 22-6 46 6l-18 8v34c-8-2-8-10-8-20L3 40z" fill="#3d95d8"/><path d="M20 6c20-10 36 4 36 18L42 38V18l-12 8-10 2z" fill="#5aa9e0"/><path d="M56 24c2 18-12 32-32 28l4-16h14z" fill="#f0964a"/><path d="M28 24l16-10v24h-6V24l-6 4v20l-8-4z" fill="#fff"/></svg>
  <div><b>河东软件园</b><span>www.pc0359.cn</span></div>
</div>
</body>
</html>
```
FILE: styles.css
```css
* { box-sizing: border-box; }
body { margin: 0; height: 100vh; display: flex; flex-direction: column; overflow: hidden; background: #f0f0f0; color: #111; font: 12px/16px "Noto Sans", "Noto Sans CJK SC", sans-serif; position: relative; }
h1, h2, h3, p, ul { margin: 0; padding: 0; font-size: 12px; font-weight: normal; }
ul { list-style: none; }
button, input, select { font: inherit; color: inherit; margin: 0; padding: 0; }
button { background: none; border: 0; display: flex; align-items: center; justify-content: center; white-space: nowrap; }
a { color: inherit; text-decoration: none; }
.defs { position: absolute; }
.ic { width: 16px; height: 16px; flex: none; }
.ic.wide { width: 18px; height: 18px; }

.titlebar { flex: none; height: 22px; padding-left: 3px; display: flex; align-items: center; color: #4c5866; border-top: 1px solid #485058; background: linear-gradient(#b9c9db, #d6e2ee); white-space: nowrap; }
.titlebar h1 { margin: 0 14px 0 7px; }
.titlebar span { margin-right: 20px; }
.winbtns { margin-left: auto; display: flex; gap: 4px; padding-right: 4px; }
.winbtns button { width: 29px; height: 14px; border: 1px solid #8b9aab; border-radius: 3px; background: #d3deea; }
.min { width: 12px; height: 4px; border: 1px solid #667; background: #fff; }
.res { width: 9px; height: 8px; border: 2px solid #667; box-shadow: 2px -2px 0 -1px #889; background: #fff; }

.menu { flex: none; height: 25px; padding: 8px 0 0 20px; display: flex; gap: 19px; }
.menu u { text-underline-offset: 1px; }

.toolbar { flex: none; height: 26px; display: flex; align-items: center; }
.toolbar.second { height: 34px; padding-bottom: 2px; }
.toolbar button { width: 26px; height: 24px; flex: none; }
.toolbar button.nar { width: 24px; }
.toolbar button.al { width: 28px; }
.toolbar button.on { border: 1px solid #48a038; background: #b6d0ec; }
.grip { flex: none; width: 3px; height: 18px; margin: 0 0 0 2px; background: repeating-linear-gradient(#a8a8a8 0 1px, #f0f0f0 1px 2px); }
.grip.mid { margin: 0 3px 0 6px; }
.sep { flex: none; width: 6px; height: 24px; border-left: 1px solid #b0b0b0; margin-left: 2px; margin-right: -2px; }

select { appearance: none; border: 1px solid #707070; border-radius: 3px; height: 22px; padding-left: 3px; background: url("data:image/svg+xml,%3Csvg xmlns='http://www.w3.org/2000/svg' width='8' height='4'%3E%3Cpath d='M0 0h8L4 4z'/%3E%3C/svg%3E") no-repeat right 5px center, linear-gradient(#f3f3f3, #e8e8e8 50%, #dcdcdc 50%, #cfcfcf); }
select.flat { border: 0; border-radius: 0; height: 18px; padding-left: 2px; margin: 0 0 4px 4px; background: url("data:image/svg+xml,%3Csvg xmlns='http://www.w3.org/2000/svg' width='16' height='16'%3E%3Cpath d='M0 0h16v16H0z' fill='%23f0f0f0' stroke='%23fff'/%3E%3Cpath d='M5 6h6L8 9z'/%3E%3C/svg%3E") no-repeat right center #fff; }
.zoomsel { width: 56px; }
.langsel { width: 56px; }
.statesel { width: 76px; }
select.flat.dim { color: #666; background-color: transparent; width: 126px; }

main { flex: 1; min-height: 0; display: flex; border-top: 1px solid #a0a0a0; }
.side { flex: none; display: flex; flex-direction: column; }
.left { width: 230px; padding: 0 4px 0 5px; }
.right { width: 200px; padding: 0 3px; }
.cap { flex: none; height: 19px; margin-bottom: 2px; display: flex; align-items: center; gap: 4px; padding: 0 3px 0 8px; border: 1px solid #a8a8a8; border-radius: 2px; }
.right .cap { padding-right: 6px; margin-bottom: 1px; }
.cap h2 { margin-right: auto; }
.cap svg { width: 10px; height: 10px; }
.treebox { flex: none; height: 580px; margin: 0 1px 0 2px; padding: 2px; border: 1px solid #a0a0a0; }
.treein { height: 100%; border: 1px solid #a0a0a0; background: #fff; display: flex; flex-direction: column; }
.treemid { flex: 1; min-height: 0; display: flex; }
.tree { flex: 1; min-width: 0; overflow: hidden; padding-top: 2px; }
.tree li { display: flex; align-items: center; height: 20px; white-space: nowrap; padding-left: 32px; }
.tree li::before { content: ""; flex: none; width: 19px; height: 20px; border-left: 1px dotted #888; }
.tree i { flex: none; width: 10px; height: 20px; border-left: 1px dotted #888; background: repeating-linear-gradient(90deg, #999 0 1px, transparent 1px 2px) 0 10px / 100% 1px no-repeat; }
.tree .last i { height: 10px; align-self: flex-start; background-position: 0 9px; }
.tree li.node { padding-left: 26px; }
.tree li.node::before { display: none; }
.exp { width: 12px; height: 11px; margin-right: 5px; border: 1px solid #909090; border-radius: 2px; background: linear-gradient(#357, #357) center / 6px 1px no-repeat; }
.exp.plus { background: linear-gradient(#357, #357) center / 6px 1px no-repeat, linear-gradient(#357, #357) center / 1px 6px no-repeat; }
.tree span { padding: 0 2px; margin-left: 3px; line-height: 18px; }
.tree .sel { background: #eee; }
.vbar { flex: none; width: 17px; background: #f0f0f0; display: flex; flex-direction: column; align-items: center; padding: 8px 0; }
.track { flex: 1; align-self: stretch; padding: 0 1px; display: flex; flex-direction: column; }
.thumb { border: 1px solid #989898; border-radius: 2px; background: linear-gradient(90deg, #f4f4f4, #e4e4e4 50%, #c8c8c8); display: flex; align-items: center; justify-content: center; }
.treethumb { height: 390px; margin-top: 108px; }
.gridthumb { height: 172px; margin-top: 6px; }
.ribs { width: 7px; height: 8px; background: repeating-linear-gradient(#666 0 1px, transparent 1px 3px); }
.ribs.v { width: 8px; height: 7px; background: repeating-linear-gradient(90deg, #666 0 1px, transparent 1px 3px); }
.hbar { flex: none; height: 17px; background: #f0f0f0; display: flex; align-items: center; padding: 0 26px 0 7px; }
.hthumb { width: 62px; height: 15px; margin: 0 auto 0 8px; border: 1px solid #989898; border-radius: 2px; background: linear-gradient(#f4f4f4, #e4e4e4 50%, #c8c8c8); display: flex; align-items: center; justify-content: center; }
.arr { width: 0; height: 0; border: 3px solid transparent; }
.arr.up { border-top: 0; border-bottom: 4px solid #333; }
.arr.dn { border-bottom: 0; border-top: 4px solid #333; }
.arr.lf { border-left: 0; border-right: 4px solid #111; }
.arr.rt { border-right: 0; border-left: 4px solid #111; }
.desc { flex: 1; margin: 3px 1px 2px 2px; padding: 0 2px; border: 1px solid #a0a0a0; font: bold 15px/18px "Noto Sans CJK SC", sans-serif; white-space: nowrap; }
.ptabs { flex: none; height: 22px; margin-bottom: 7px; display: flex; background: #f8f8f8; padding-left: 6px; }
.ptabs button { gap: 4px; padding: 0 4px; color: #666; border-right: 1px solid #a0a0a0; width: 81px; }
.ptabs .act { width: 84px; color: #111; background: #f0f0f0; border-right: 1px solid #000; border-bottom: 1px solid #000; padding-right: 10px; }
.right .ptabs { padding-left: 5px; }

.center { flex: 1; min-width: 0; display: flex; flex-direction: column; border: 1px solid #a0a0a0; border-top: 0; margin-bottom: 2px; }
.dtabs { flex: none; height: 24px; padding-bottom: 1px; display: flex; align-items: center; background: #f8f8f8; }
.dtabs > button { height: 18px; padding: 0 8px; border-right: 1px solid #a0a0a0; }
.dtabs > button:first-child { padding: 0 5px; }
.dtabs > button.act { height: 22px; padding: 0 8px; border-right: 1px solid #000; background: #f0f0f0; font: bold 12px/16px "Liberation Mono", monospace; }
.nav { margin-left: auto; display: flex; align-items: center; gap: 11px; padding-right: 3px; }
.nav svg { width: 9px; height: 9px; }
.canvas { flex: 1; overflow: hidden; background: #808080; border-top: 1px solid #606060; border-bottom: 2px solid #f8f8f8; padding-left: 2px; }
.hmi { width: 601px; height: 361px; border: 1px solid #001018; background: #38c4f6; padding: 2px; color: #e01818; }
.hmi em { font: 9px/11px "Liberation Mono", monospace; }
.disp { height: 37px; display: flex; background: #c4f1fd; }
.disp strong { margin-left: 134px; color: #0c6ca4; font: 33px/38px "Liberation Serif", serif; }
.limits { display: grid; grid-template-columns: 76px 216px 84px 215px; height: 30px; }
.lbl { padding-left: 32px; color: #e4fbff; font: 22px/28px "Liberation Serif", serif; }
.fld { display: flex; background: #c4f1fd; height: 24px; }
.keys { display: grid; gap: 5px; padding-top: 1px; }
.keys button { width: 100%; height: 43px; border: 1px solid #124a78; border-radius: 5px; background: linear-gradient(#e4eff4, #a4e4f8); }

.partsbox { flex: 1; margin: 0 1px 1px 2px; padding: 3px 2px 0; border: 1px solid #a0a0a0; }
.partsin { height: 100%; border: 1px solid #a0a0a0; padding: 2px; }
.partsin h3 { height: 23px; line-height: 22px; text-align: center; border-bottom: 1px solid #a0a0a0; border-top: 1px solid #fff; border-left: 1px solid #fff; }
.parts { padding: 11px 0 0 2px; }
.parts li { height: 23px; display: flex; align-items: center; gap: 6px; white-space: nowrap; }

.output { flex: none; height: 26px; background: #f8f8f8; padding: 1px 0 3px 24px; border-bottom: 1px solid #909090; margin-bottom: 1px; display: flex; }
.output button { width: 66px; background: #f0f0f0; border: 1px solid #a0a0a0; border-bottom: 0; }
.status { flex: none; height: 18px; display: flex; gap: 2px; background: #f2eeec; }
.status span { border: 1px solid #a8a8a8; padding-left: 2px; }
.status span:first-child { flex: 1; padding-left: 0; }
.status .s2 { width: 358px; } .status .s3 { width: 28px; } .status .s4 { width: 41px; } .status .s5 { width: 31px; }

.dialog { position: absolute; left: 275px; top: 178px; width: 743px; height: 571px; border: 1px solid #203848; border-radius: 6px 6px 0 0; box-shadow: inset -2px -2px 0 #78d0e4, inset 1px 1px 0 #e8f4fc; background: #f0f0f0; display: flex; flex-direction: column; }
.dialog header { height: 24px; padding: 0 3px 0 6px; display: flex; align-items: center; justify-content: space-between; border-radius: 6px 6px 0 0; background: linear-gradient(#9ab0cc, #b8d0ec); border-right: 2px solid #78d0e4; }
.dialog header button { width: 31px; height: 17px; border: 1px solid #501818; border-radius: 2px; background: linear-gradient(#e8a090, #d86858 50%, #b83020 50%, #d86048); }
.dialog label { white-space: nowrap; }
.rowdesc { display: flex; align-items: center; margin: 8px 0 0 28px; }
.rowdesc label { width: 65px; }
.edit { width: 536px; height: 20px; display: flex; align-items: center; background: #fff; border: 1px solid #a8c8dc; border-top-color: #4078a0; padding-left: 2px; }
.edit input { width: 49px; height: 14px; border: 0; background: #3399ff; color: #fff; }
fieldset { margin: 0; padding: 0; border: 1px solid #dadada; border-radius: 3px; min-width: 0; }
legend { padding: 0 3px; margin-left: -5px; line-height: 12px; height: 12px; }
.set { margin: 1px 15px 0 23px; height: 70px; padding-left: 8px; display: grid; grid-template-columns: 72px 137px 79px 101px auto; grid-template-rows: 20px 24px; row-gap: 6px; align-items: center; }
.spin { display: flex; gap: 4px; }
.spin input { width: 57px; height: 19px; border: 1px solid #e4e4e4; background: #fff; padding-left: 3px; }
.spin span { display: flex; flex-direction: column; }
.spin button { width: 15px; height: 9px; border: 1px solid #a8a8a8; background: #f0f0f4; }
.spin .arr { border-left-width: 2px; border-right-width: 2px; }
.spin .arr.up { border-bottom: 3px solid #4858a0; }
.spin .arr.dn { border-top: 3px solid #4858a0; }
.w102 { width: 102px; } .w62 { width: 62px; } .w74 { width: 74px; }
.point { display: flex; align-items: center; }
.point span { width: 70px; }
.point span + span { width: 33px; }
.btn { height: 22px; border: 1px solid #707070; border-radius: 3px; box-shadow: inset 0 0 0 1px #fbfbfb; background: linear-gradient(#f3f3f3, #ebebeb 50%, #dddddd 50%, #cfcfcf); }
.btn:disabled { color: #8a8a8a; border-color: #b4b4b4; background: #f4f4f4; }
.point .btn { width: 28px; }
.box { height: 23px; border: 1px solid #b0b0b0; border-radius: 2px; background: #f0f0f0; color: #777; padding-left: 2px; }
input[type=checkbox] { appearance: none; flex: none; width: 13px; height: 13px; border: 1px solid #8e8f8f; background: linear-gradient(135deg, #c8ccd0, #f8f8f8); box-shadow: inset 0 0 0 1px #f4f4f4; margin-right: 3px; }
input[type=radio] { appearance: none; flex: none; width: 13px; height: 13px; border: 1px solid #b8b8b8; border-radius: 50%; background: #f0f0f0; margin-right: 2px; }
input[type=radio]:checked { background: radial-gradient(#777 0 3px, #f0f0f0 4px); }
.rowaddr { display: flex; align-items: center; height: 24px; margin: 3px 0 0 17px; }
.l1 { width: 86px; } .l2 { width: 77px; } .l3 { width: 54px; margin-left: 24px; }
.rowaddr .box { width: 104px; margin-right: 2px; }
.w78 { width: 78px; }
.recipe { margin: 3px 15px 0 14px; height: 269px; padding: 3px 0 0 7px; display: flex; align-items: flex-start; gap: 30px; }
.grid { width: 551px; height: 251px; border: 1px solid #606060; background: #a0a0a0; display: flex; }
.cells { flex: 1; overflow: hidden; }
table { border-collapse: separate; border-spacing: 0; table-layout: fixed; width: 253px; }
th, td { width: 37px; height: 25px; padding: 0; text-align: center; font-weight: normal; background: #fff; border-right: 1px solid #000; border-bottom: 1px solid #000; }
th { background: #f0f0f0; border-color: #606060; }
.c1 { width: 54px; } .c2 { width: 88px; }
.acts { width: 91px; padding-top: 4px; display: grid; gap: 3px; }
.acts .btn { height: 24px; }
.acts .gapped { margin-top: 60px; }
.bottom { display: flex; gap: 12px; margin: 9px 0 0 17px; }
.trig { width: 465px; height: 69px; padding: 2px 0 0 10px; }
.trow { height: 24px; margin-bottom: 3px; display: flex; align-items: center; }
.t1 { width: 60px; } .t2 { width: 117px; } .t3 { width: 31px; color: #777; }
.trow .box { width: 68px; height: 20px; margin-right: 13px; }
.trow .btn { width: 66px; height: 20px; margin-right: 11px; }
.okrow { display: grid; grid-template-columns: 97px 97px; grid-auto-rows: 29px; gap: 8px 6px; padding-top: 2px; }
.okrow .btn { height: 29px; }
.okrow .ok { grid-column: 2; border-color: #2c80a8; box-shadow: inset 0 0 0 2px #70d8f8; background: linear-gradient(#eef6fa, #dcecf6 50%, #c4dcec 50%, #b4d4e8); }

.pointer { position: absolute; left: 127px; top: 385px; pointer-events: none; }
.mark { position: absolute; left: 5px; top: 12px; display: flex; gap: 2px; opacity: .85; pointer-events: none; }
.mark div { display: flex; flex-direction: column; padding-top: 4px; }
.mark b { color: #459fe4; font: bold 27px/28px "Noto Sans CJK SC", sans-serif; }
.mark span { color: #50a850; font: bold 20px/24px "Liberation Serif", serif; }
```
